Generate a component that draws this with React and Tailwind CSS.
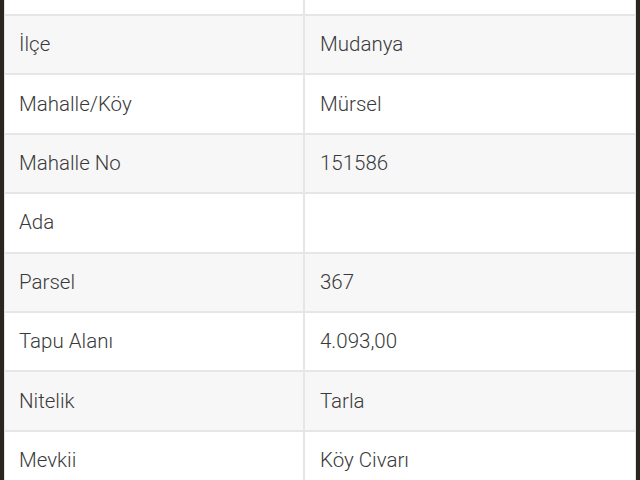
const rows = [
  ['İlçe', 'Mudanya'],
  ['Mahalle/Köy', 'Mürsel'],
  ['Mahalle No', '151586'],
  ['Ada', ''],
  ['Parsel', '367'],
  ['Tapu Alanı', '4.093,00'],
  ['Nitelik', 'Tarla'],
  ['Mevkii', 'Köy Civarı'],
];

export default function App() {
  return (
    <div className="h-[480px] overflow-hidden bg-[#2a251f] px-[4px]">
      <div className="h-full bg-white border-x border-[#e2e2e2] font-['Roboto',sans-serif] font-light text-[20.5px] text-[#3a3a3a]">
        <div className="grid grid-cols-[300px_1fr] h-[16px] border-b-2 border-[#e6e6e6]">
          <div className="border-r-2 border-[#e6e6e6]" />
          <div />
        </div>
        {rows.map(([label, value], i) => (
          <div
            key={label}
            className={`grid grid-cols-[300px_1fr] h-[59.4px] border-b-2 border-[#e6e6e6] ${i % 2 === 0 ? 'bg-[#f7f7f7]' : 'bg-white'}`}
          >
            <div className="flex items-center pl-[14px] border-r-2 border-[#e6e6e6]">{label}</div>
            <div className="flex items-center pl-[15px]">{value}</div>
          </div>
        ))}
      </div>
    </div>
  );
}
